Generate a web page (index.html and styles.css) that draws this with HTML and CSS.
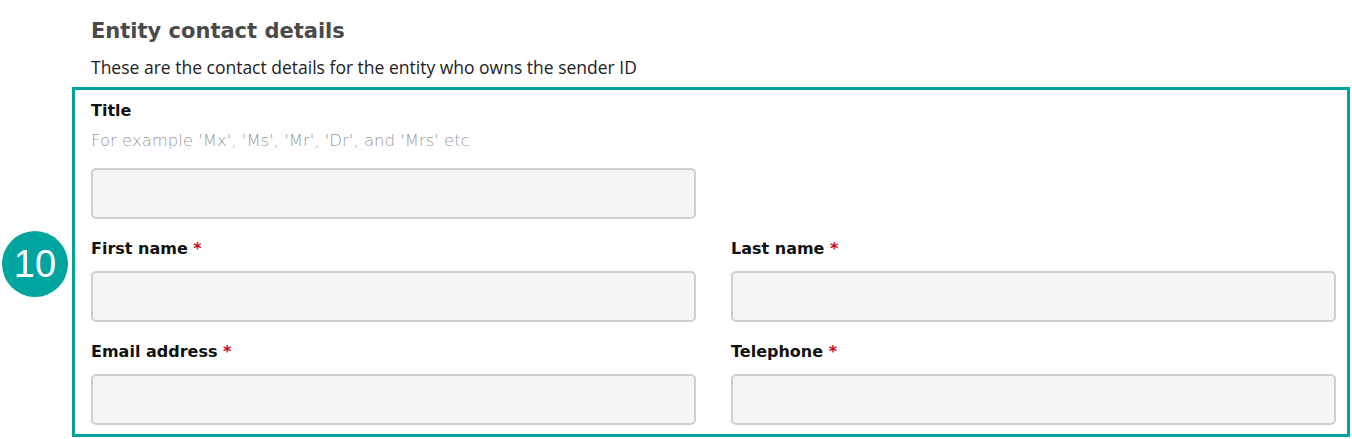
FILE: index.html
```html
<!DOCTYPE html>
<html lang="en">
<head>
  <meta charset="UTF-8">
  <title>Entity contact details</title>
  <link rel="stylesheet" href="styles.css">
</head>
<body>
  <section class="section">
    <h2 class="section-title">Entity contact details</h2>
    <p class="section-desc">These are the contact details for the entity who owns the sender ID</p>

    <div class="box">
      <span class="step">10</span>

      <div class="field field-half">
        <label class="label" for="title">Title</label>
        <p class="hint">For example 'Mx', 'Ms', 'Mr', 'Dr', and 'Mrs' etc</p>
        <input class="input" type="text" id="title">
      </div>

      <div class="grid">
        <div class="field">
          <label class="label" for="first">First name <span class="req">*</span></label>
          <input class="input" type="text" id="first">
        </div>
        <div class="field">
          <label class="label" for="last">Last name <span class="req">*</span></label>
          <input class="input" type="text" id="last">
        </div>
        <div class="field">
          <label class="label" for="email">Email address <span class="req">*</span></label>
          <input class="input" type="text" id="email">
        </div>
        <div class="field">
          <label class="label" for="phone">Telephone <span class="req">*</span></label>
          <input class="input" type="text" id="phone">
        </div>
      </div>
    </div>
  </section>
</body>
</html>
```

FILE: styles.css
```css
body {
  margin: 0;
  padding: 0;
  background-color: #fff;
  font-family: "Open Sans", Arial, sans-serif;
  color: #222;
}

.section {
  padding: 18px 2px 0 72px;
}

.section-title {
  margin: 0 0 0 19px;
  font-family: "DejaVu Sans", Arial, sans-serif;
  font-size: 21px;
  line-height: 26px;
  font-weight: 700;
  color: #4a4a4a;
}

.section-desc {
  margin: 12px 0 9px 19px;
  font-size: 17.5px;
  line-height: 22px;
  color: #222;
}

.box {
  position: relative;
  border: 3px solid #00a19c;
  padding: 10px 12px 9px 16px;
}

.step {
  position: absolute;
  left: -73px;
  top: 141px;
  width: 66px;
  height: 66px;
  border-radius: 50%;
  background-color: #00a5a0;
  color: #fff;
  font-family: "Liberation Sans", Arial, sans-serif;
  font-size: 38px;
  line-height: 66px;
  text-align: center;
}

.field-half {
  width: 605px;
}

.grid {
  display: grid;
  grid-template-columns: 605px 605px;
  column-gap: 35px;
}

.field {
  display: flex;
  flex-direction: column;
}

.label {
  font-family: "DejaVu Sans", Arial, sans-serif;
  font-size: 16px;
  line-height: 22px;
  font-weight: 700;
  color: #111;
  margin-top: 19px;
  margin-bottom: 11px;
}

.field-half .label {
  margin-top: 0;
  margin-bottom: 0;
}

.req {
  color: #d0021b;
}

.hint {
  margin: 8px 0 16px;
  font-family: "DejaVu Sans", Arial, sans-serif;
  font-weight: 200;
  font-size: 16.5px;
  line-height: 22px;
  color: #9a9a9a;
}

.input {
  box-sizing: border-box;
  height: 51px;
  border: 2px solid #cfcfcf;
  border-radius: 5px;
  background-color: #f5f4f7;
  margin: 0;
}
```
